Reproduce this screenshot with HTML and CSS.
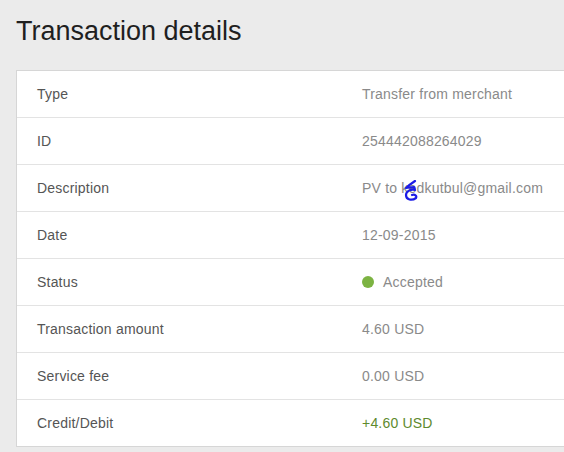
FILE: index.html
```html
<!DOCTYPE html>
<html>
<head>
<meta charset="utf-8">
<link rel="stylesheet" href="styles.css">
</head>
<body>
<div class="page">
  <h1 class="title">Transaction details</h1>
  <div class="card">
    <div class="row"><div class="label">Type</div><div class="value">Transfer from merchant</div></div>
    <div class="row"><div class="label">ID</div><div class="value">254442088264029</div></div>
    <div class="row"><div class="label">Description</div><div class="value desc">PV to kedkutbul@gmail.com<svg class="scribble" width="18" height="22" viewBox="0 0 18 22"><path d="M12 1 C9 3 6 5 3 8 L11 7 L12 10 C8 9 3 11 3 15 C3 20 9 21 13 18 C14 16 12 14 9 15" fill="none" stroke="#1c1ce6" stroke-width="2.2" stroke-linecap="round" stroke-linejoin="round"/></svg></div></div>
    <div class="row"><div class="label">Date</div><div class="value">12-09-2015</div></div>
    <div class="row"><div class="label">Status</div><div class="value status"><span class="dot"></span>Accepted</div></div>
    <div class="row"><div class="label">Transaction amount</div><div class="value">4.60 USD</div></div>
    <div class="row"><div class="label">Service fee</div><div class="value">0.00 USD</div></div>
    <div class="row"><div class="label">Credit/Debit</div><div class="value credit">+4.60 USD</div></div>
  </div>
</div>
</body>
</html>
```
FILE: styles.css
```css
html, body {
  margin: 0;
  padding: 0;
  background: #ebebeb;
  overflow: hidden;
}
.page {
  padding: 15px 0 0 16px;
  font-family: "Liberation Sans", Arial, sans-serif;
}
.title {
  margin: 0 0 23px 0;
  font-size: 27px;
  line-height: 32px;
  font-weight: normal;
  color: #1f1f1f;
}
.card {
  background: #fff;
  border: 1px solid #d6d6d6;
  border-right: none;
}
.row {
  display: grid;
  grid-template-columns: 325px 1fr;
  align-items: center;
  height: 46px;
  padding-left: 20px;
  border-bottom: 1px solid #e3e3e3;
  font-size: 14px;
  letter-spacing: 0.2px;
}
.row:last-child {
  border-bottom: none;
}
.label {
  color: #555;
}
.value {
  color: #8a8a8a;
}
.desc {
  position: relative;
}
.scribble {
  position: absolute;
  left: 41px;
  top: 0;
}
.status {
  display: flex;
  align-items: center;
}
.dot {
  width: 12px;
  height: 12px;
  border-radius: 50%;
  background: #7cb342;
  margin-right: 9px;
}
.credit {
  color: #5e8a2e;
}
```
